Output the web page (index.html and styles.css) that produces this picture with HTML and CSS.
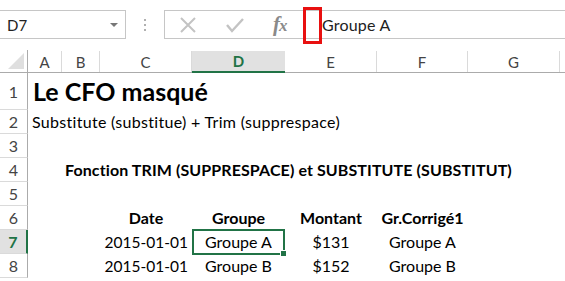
FILE: index.html
```html
<!DOCTYPE html>
<html lang="fr">
  <head>
    <meta charset="UTF-8" />
    <title>Le CFO masqué</title>
    <link rel="stylesheet" href="styles.css">
  </head>
  <body>
    <!-- Formula bar -->
    <header class="toolbar">
      <div class="name-box">
        <span class="cell-ref">D7</span>
        <span class="drop-arrow"></span>
      </div>
      <div class="grip">
        <span></span><span></span><span></span>
      </div>
      <div class="formula-box">
        <div class="formula-icons">
          <svg class="icon" width="18" height="18" viewBox="0 0 18 18">
            <path d="M2 2 L16 16 M16 2 L2 16" stroke="#c3c3c3" stroke-width="2" fill="none" />
          </svg>
          <svg class="icon" width="20" height="18" viewBox="0 0 20 18">
            <path d="M2 9 L7 15 L18 3" stroke="#c3c3c3" stroke-width="2.4" fill="none" />
          </svg>
          <span class="fx">f<i>x</i></span>
        </div>
        <span class="marker"></span>
        <span class="formula-text">Groupe A</span>
      </div>
    </header>

    <!-- Sheet -->
    <section class="sheet">
      <div class="row col-heads">
        <div class="corner"><span class="corner-tri"></span></div>
        <div class="col-head">A</div>
        <div class="col-head">B</div>
        <div class="col-head">C</div>
        <div class="col-head active">D</div>
        <div class="col-head">E</div>
        <div class="col-head">F</div>
        <div class="col-head">G</div>
        <div class="col-head last"></div>
      </div>

      <div class="row tall">
        <div class="row-head">1</div>
        <div class="cell title span-all">Le CFO masqué</div>
      </div>
      <div class="row">
        <div class="row-head">2</div>
        <div class="cell span-all wide">Substitute (substitue) + Trim (supprespace)</div>
      </div>
      <div class="row">
        <div class="row-head">3</div>
      </div>
      <div class="row">
        <div class="row-head">4</div>
        <div class="cell bold subtitle">Fonction TRIM (SUPPRESPACE) et SUBSTITUTE (SUBSTITUT)</div>
      </div>
      <div class="row">
        <div class="row-head">5</div>
      </div>
      <div class="row">
        <div class="row-head">6</div>
        <div class="cell c-col bold center">Date</div>
        <div class="cell bold center">Groupe</div>
        <div class="cell bold center">Montant</div>
        <div class="cell bold center">Gr.Corrigé1</div>
      </div>
      <div class="row">
        <div class="row-head active">7</div>
        <div class="cell c-col right date">2015-01-01</div>
        <div class="cell center selected">Groupe A<span class="handle"></span></div>
        <div class="cell center">$131</div>
        <div class="cell center">Groupe A</div>
      </div>
      <div class="row">
        <div class="row-head">8</div>
        <div class="cell c-col right date">2015-01-01</div>
        <div class="cell center">Groupe B</div>
        <div class="cell center">$152</div>
        <div class="cell center">Groupe B</div>
      </div>
    </section>
  </body>
</html>
```

FILE: styles.css
```css
/* General */
body {
  margin: 0;
  padding: 0;
  background: #ffffff;
  font-family: Lato, "Liberation Sans", sans-serif;
  font-size: 16px;
  color: #000;
  width: 565px;
  height: 281px;
  overflow: hidden;
}

/* Formula bar */
.toolbar {
  height: 50px;
  display: flex;
  align-items: flex-start;
  padding-top: 10px;
  box-sizing: border-box;
}

.name-box {
  width: 126px;
  height: 29px;
  box-sizing: border-box;
  border: 1px solid #c6c6c6;
  border-left: none;
  display: flex;
  align-items: center;
  justify-content: space-between;
  padding: 0 7px 0 7px;
}

.cell-ref {
  color: #222;
  font-size: 15px;
}

.drop-arrow {
  width: 0;
  height: 0;
  border-left: 4px solid transparent;
  border-right: 4px solid transparent;
  border-top: 4px solid #777;
}

.grip {
  width: 38px;
  height: 29px;
  display: flex;
  flex-direction: column;
  align-items: center;
  justify-content: center;
  gap: 3px;
}

.grip span {
  width: 2px;
  height: 2px;
  background: #b0b0b0;
}

.formula-box {
  flex: 1;
  height: 29px;
  box-sizing: border-box;
  border: 1px solid #c6c6c6;
  border-right: none;
  display: flex;
  align-items: center;
  position: relative;
}

.formula-icons {
  display: flex;
  align-items: center;
  gap: 28px;
  padding-left: 14px;
  width: 124px;
  box-sizing: border-box;
}

.fx {
  font-family: "Liberation Serif", serif;
  font-style: italic;
  font-weight: bold;
  font-size: 21px;
  color: #8a8a8a;
  letter-spacing: -1px;
}

.fx i {
  font-size: 17px;
}

.marker {
  position: absolute;
  left: 138px;
  top: -4px;
  width: 13px;
  height: 31px;
  border: 3px solid #e81010;
}

.formula-text {
  margin-left: 33px;
  color: #222;
  letter-spacing: 0.2px;
}

/* Sheet */
.sheet {
  display: flex;
  flex-direction: column;
}

.row {
  display: grid;
  grid-template-columns: 28px 34px 38px 92px 93px 92px 91px 92px 1fr;
  height: 24px;
}

.row.tall {
  height: 37px;
}

.col-heads {
  height: 23px;
  border-bottom: 1px solid #ababab;
  box-sizing: border-box;
  font-size: 15px;
}

.corner {
  position: relative;
  border-right: 1px solid #ababab;
}

.corner-tri {
  position: absolute;
  right: 3px;
  bottom: 3px;
  width: 0;
  height: 0;
  border-left: 16px solid transparent;
  border-bottom: 16px solid #dfdfdf;
}

.col-head {
  display: flex;
  align-items: center;
  justify-content: center;
  color: #444;
  border-right: 1px solid #dadada;
  margin-top: 1px;
}

.col-head.last {
  border-right: none;
}

.col-head.active {
  background: #e1e1e1;
  color: #217346;
  font-weight: bold;
  border-bottom: 2px solid #217346;
  margin-bottom: -1px;
  border-right: none;
}

.row-head {
  display: flex;
  align-items: center;
  justify-content: center;
  color: #444;
  font-size: 16px;
  border-right: 1px solid #ababab;
  border-bottom: 1px solid #dadada;
  box-sizing: border-box;
}

.row-head.active {
  background: #e1e1e1;
  color: #217346;
  font-weight: bold;
  border-right: 2px solid #217346;
}

.cell {
  display: flex;
  align-items: flex-end;
  padding: 0 4px 3px 4px;
  white-space: nowrap;
  box-sizing: border-box;
}

.span-all {
  grid-column: 2 / -1;
}

.wide {
  letter-spacing: 0.3px;
}

.title {
  font-size: 25px;
  font-weight: bold;
  padding-left: 5px;
  padding-bottom: 4px;
}

.subtitle {
  grid-column: 4 / -1;
  padding-left: 0;
  margin-left: -35px;
  letter-spacing: 0.1px;
}

.c-col {
  grid-column: 4;
}

.date {
  font-size: 15.5px;
}

.bold {
  font-weight: bold;
}

.center {
  justify-content: center;
}

.right {
  justify-content: flex-end;
}

.selected {
  position: relative;
  border: 2px solid #217346;
  margin: -1px 0 -1px 0;
  padding-bottom: 2px;
}

.handle {
  position: absolute;
  right: -4px;
  bottom: -4px;
  width: 5px;
  height: 5px;
  background: #217346;
  border: 1px solid #fff;
}
```
